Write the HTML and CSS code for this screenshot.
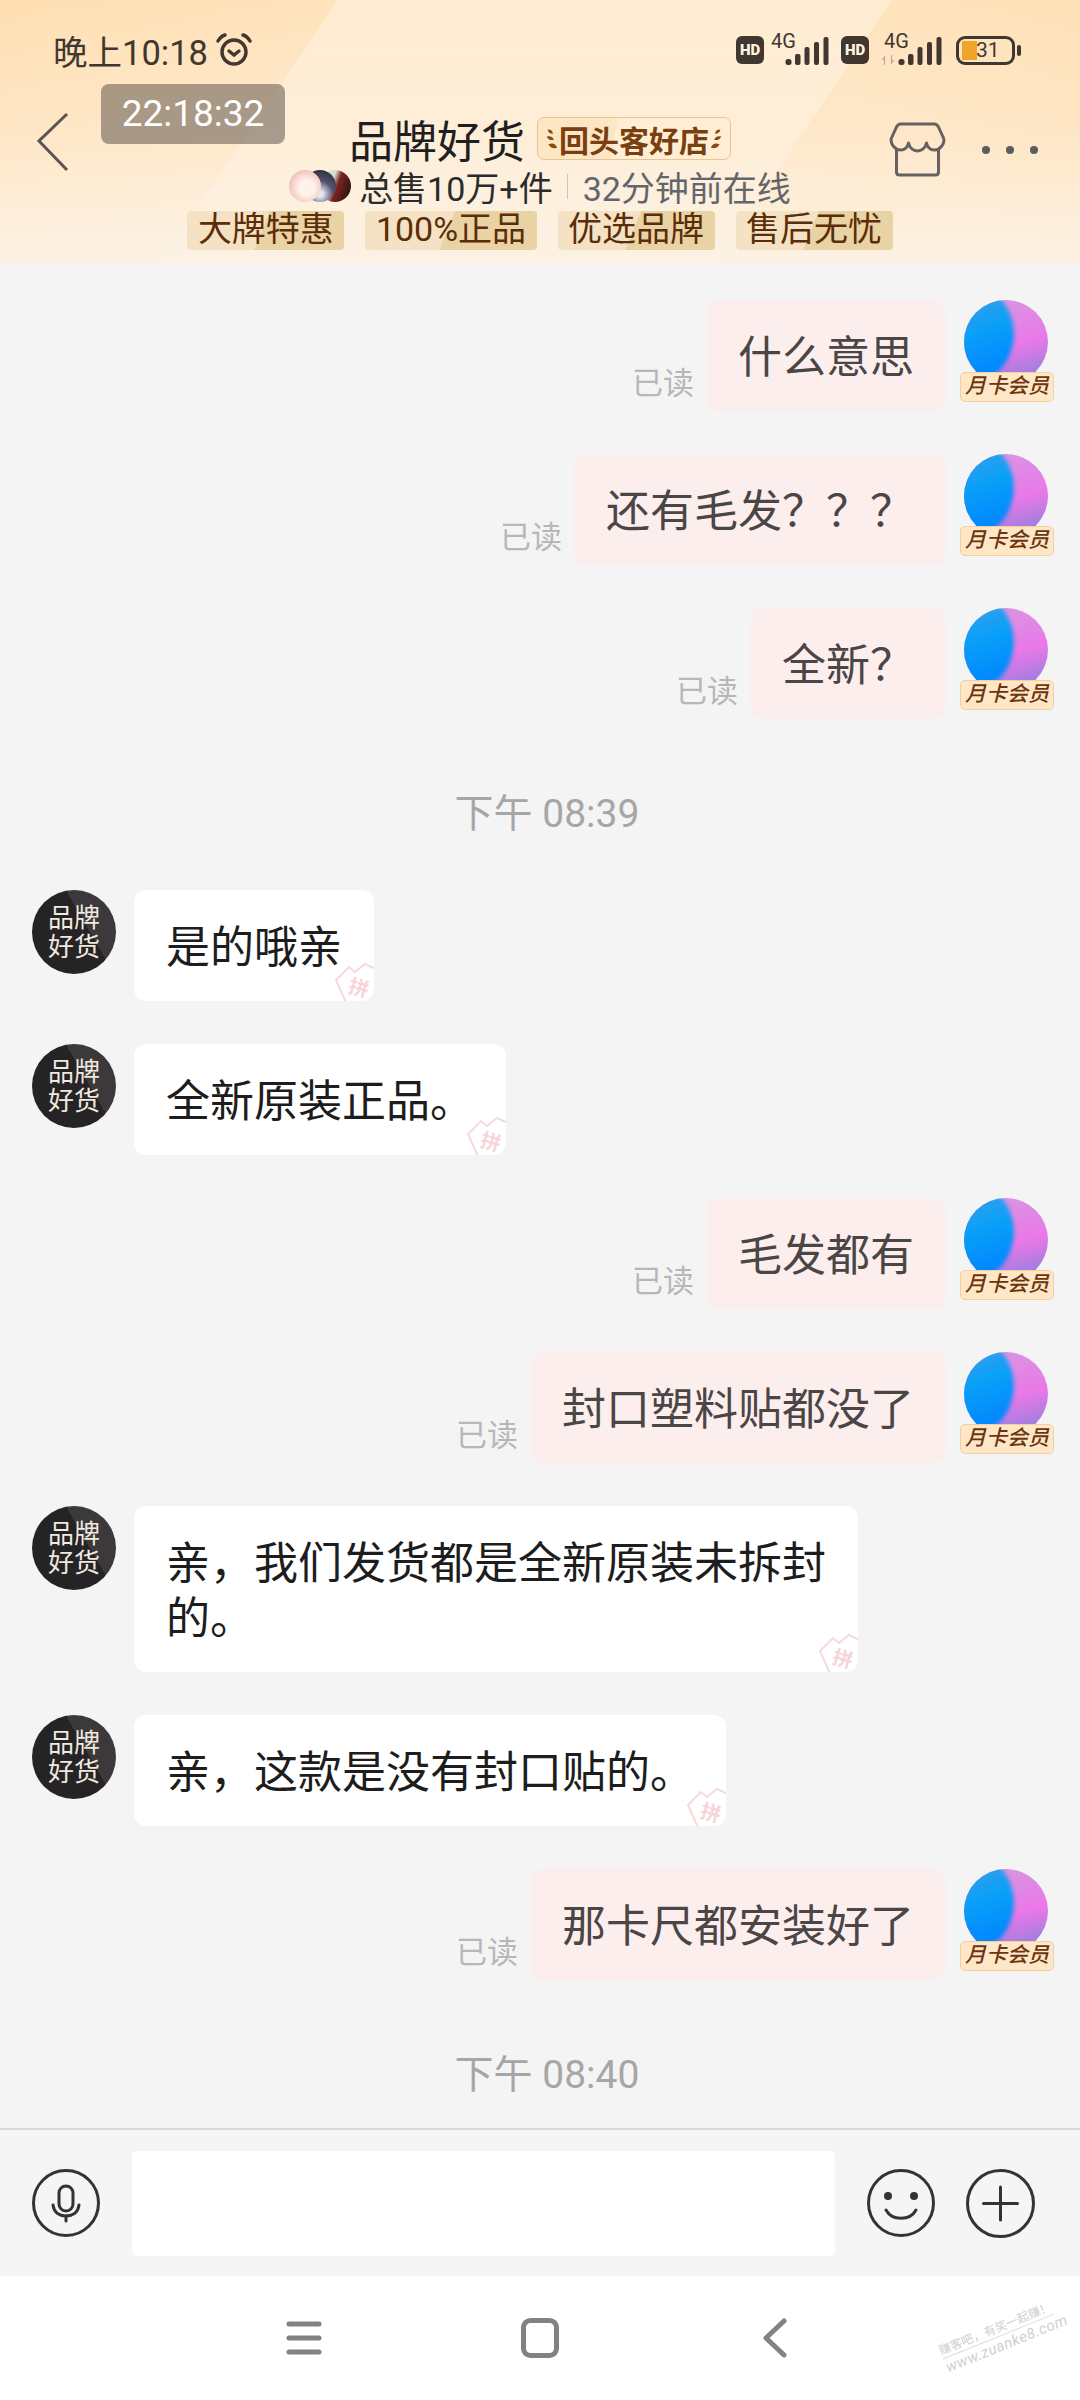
FILE: index.html
```html
<!DOCTYPE html>
<html>

<head>
    <title>品牌好货</title>
    <link rel="stylesheet" href="styles.css">
</head>

<body>
    <svg class="defs" width="0" height="0">
        <symbol id="signal" viewBox="0 0 43 30">
            <rect x="0" y="23" width="6" height="6" rx="2.5" />
            <rect x="9.5" y="18" width="5.5" height="11" rx="2" />
            <rect x="19" y="11" width="5" height="18" rx="2" />
            <rect x="28.500" y="6" width="5" height="23" rx="2" />
            <rect x="38" y="1" width="5" height="28" rx="2" />
        </symbol>
        <symbol id="stamp-shape" viewBox="0 0 40 38">
            <path d="M2 17 L15 4 L21 9 L31 1 L44 7 L44 46 L14 44 Z" fill="none" stroke="#f6d9dc" stroke-width="2" />
        </symbol>
    </svg>

    <header class="top">
        <div class="status">
            <div class="status-time">
                <span>晚上10:18</span>
                <svg width="36" height="34" viewBox="0 0 36 34" fill="none" stroke="#3f3730" stroke-width="3.4" stroke-linecap="round">
                    <circle cx="18" cy="19" r="12" />
                    <path d="M13 18 L18 22 L23 18" />
                    <path d="M2 8 Q5 3 9 2 M34 8 Q31 3 27 2" />
                </svg>
            </div>
            <div class="status-icons">
                <span class="hd">HD</span>
                <span class="net">
                    <span class="net-label">4G</span>
                    <svg class="net-bars" width="44" height="30"><use href="#signal" /></svg>
                </span>
                <span class="hd">HD</span>
                <span class="net net-second">
                    <span class="net-label">4G</span>
                    <svg class="net-arrows" width="14" height="12" viewBox="0 0 14 12" fill="#b9ab9a">
                        <path d="M1 6 L4 1 V11 H3 V6 Z M13 6 L10 11 V1 H11 V6 Z" />
                    </svg>
                    <svg class="net-bars" width="44" height="30"><use href="#signal" /></svg>
                </span>
                <span class="battery"><span class="battery-fill"></span><span class="battery-num">31</span></span>
                <span class="battery-nub"></span>
            </div>
        </div>

        <div class="timer">22:18:32</div>

        <div class="title-row">
            <div class="back">
                <svg width="32" height="60" viewBox="0 0 32 60" fill="none" stroke="#5a5550" stroke-width="3">
                    <path d="M30 2 L2 29 L30 58" />
                </svg>
            </div>
            <div class="title">
                <span class="shop-name">品牌好货</span>
                <span class="shop-badge">
                    <svg width="14" height="30" viewBox="0 0 16 30" fill="#8a4a12">
                        <path d="M3 4 Q9 4 9 9 Q4 9 3 4 Z M2 12 Q9 11 10 16 Q4 17 2 12 Z M4 21 Q11 18 14 25 Q7 27 4 21 Z" />
                    </svg>
                    <span>回头客好店</span>
                    <svg width="14" height="30" viewBox="0 0 16 30" fill="#8a4a12">
                        <path d="M13 4 Q7 4 7 9 Q12 9 13 4 Z M14 12 Q7 11 6 16 Q12 17 14 12 Z M12 21 Q5 18 2 25 Q9 27 12 21 Z" />
                    </svg>
                </span>
            </div>
            <div class="actions">
                <svg width="57" height="56" viewBox="0 0 56 56" fill="none" stroke="#656260" stroke-width="3" stroke-linejoin="round">
                    <path d="M11 2 H45 C47 2 48 3 49 5 L54 16 C56 22 50 28 45 28 C41 28 38 26 37 21 C36 26 32 29 28 29 C24 29 20 26 19 21 C18 26 15 28 11 28 C6 28 0 22 2 16 L7 5 C8 3 9 2 11 2 Z" />
                    <path d="M7 28 V50 Q7 53 10 53 H46 Q49 53 49 50 V28" />
                </svg>
                <div class="dots"><i></i><i></i><i></i></div>
            </div>
        </div>

        <div class="sub-row">
            <span class="faces">
                <i class="face face-a"></i>
                <i class="face face-b"></i>
                <i class="face face-c"></i>
            </span>
            <span class="sold">总售10万+件</span>
            <span class="sep"></span>
            <span class="online">32分钟前在线</span>
        </div>

        <div class="tags">
            <span class="tag">大牌特惠</span>
            <span class="tag">100%正品</span>
            <span class="tag">优选品牌</span>
            <span class="tag">售后无忧</span>
        </div>
    </header>

    <main class="chat">
        <div class="msg msg-me">
            <span class="read">已读</span>
            <div class="bubble">什么意思</div>
            <div class="me"><div class="me-ball"></div><span class="me-tag">月卡会员</span></div>
        </div>
        <div class="msg msg-me">
            <span class="read">已读</span>
            <div class="bubble">还有毛发？？？</div>
            <div class="me"><div class="me-ball"></div><span class="me-tag">月卡会员</span></div>
        </div>
        <div class="msg msg-me">
            <span class="read">已读</span>
            <div class="bubble">全新？</div>
            <div class="me"><div class="me-ball"></div><span class="me-tag">月卡会员</span></div>
        </div>

        <div class="time">下午 08:39</div>

        <div class="msg">
            <div class="shop-avatar">品牌<br>好货</div>
            <div class="bubble">是的哦亲<svg class="stamp" viewBox="0 0 40 38"><use href="#stamp-shape" width="40" height="38" /><text class="stamp-char" x="15" y="32" transform="rotate(15 25 24)">拼</text></svg></div>
        </div>
        <div class="msg">
            <div class="shop-avatar">品牌<br>好货</div>
            <div class="bubble">全新原装正品。<svg class="stamp" viewBox="0 0 40 38"><use href="#stamp-shape" width="40" height="38" /><text class="stamp-char" x="15" y="32" transform="rotate(15 25 24)">拼</text></svg></div>
        </div>

        <div class="msg msg-me">
            <span class="read">已读</span>
            <div class="bubble">毛发都有</div>
            <div class="me"><div class="me-ball"></div><span class="me-tag">月卡会员</span></div>
        </div>
        <div class="msg msg-me">
            <span class="read">已读</span>
            <div class="bubble">封口塑料贴都没了</div>
            <div class="me"><div class="me-ball"></div><span class="me-tag">月卡会员</span></div>
        </div>

        <div class="msg">
            <div class="shop-avatar">品牌<br>好货</div>
            <div class="bubble">亲，我们发货都是全新原装未拆封的。<svg class="stamp" viewBox="0 0 40 38"><use href="#stamp-shape" width="40" height="38" /><text class="stamp-char" x="15" y="32" transform="rotate(15 25 24)">拼</text></svg></div>
        </div>
        <div class="msg">
            <div class="shop-avatar">品牌<br>好货</div>
            <div class="bubble">亲，这款是没有封口贴的。<svg class="stamp" viewBox="0 0 40 38"><use href="#stamp-shape" width="40" height="38" /><text class="stamp-char" x="15" y="32" transform="rotate(15 25 24)">拼</text></svg></div>
        </div>

        <div class="msg msg-me">
            <span class="read">已读</span>
            <div class="bubble">那卡尺都安装好了</div>
            <div class="me"><div class="me-ball"></div><span class="me-tag">月卡会员</span></div>
        </div>

        <div class="time">下午 08:40</div>
    </main>

    <div class="input-bar">
        <svg width="68" height="68" viewBox="0 0 68 68" fill="none" stroke="#333" stroke-width="3" stroke-linecap="round">
            <circle cx="34" cy="34" r="32.500" />
            <rect x="27" y="17" width="14" height="25" rx="7" />
            <path d="M21 36 C22 44 28 47 34 47 C40 47 46 44 47 36" />
            <path d="M34 47 V52" />
        </svg>
        <div class="input-box"></div>
        <svg class="smile" width="68" height="68" viewBox="0 0 68 68" fill="none" stroke="#333" stroke-width="3" stroke-linecap="round">
            <circle cx="34" cy="34" r="32.500" />
            <circle cx="21" cy="27" r="4" fill="#333" stroke="none" />
            <circle cx="47" cy="27" r="4" fill="#333" stroke="none" />
            <path d="M19 41 C25 52 43 52 49 41" />
        </svg>
        <svg width="69" height="69" viewBox="0 0 69 69" fill="none" stroke="#333" stroke-width="3" stroke-linecap="round">
            <circle cx="34.500" cy="34.500" r="33" />
            <path d="M17.500 34.500 H51.500 M34.500 18 V51" />
        </svg>
    </div>

    <nav class="nav">
        <svg width="36" height="36" viewBox="0 0 36 36" stroke="#828282" stroke-width="5" stroke-linecap="round">
            <path d="M3 4 H33 M3 18 H33 M3 32 H33" />
        </svg>
        <svg width="38" height="40" viewBox="0 0 38 40" fill="none" stroke="#828282" stroke-width="5">
            <rect x="2.500" y="2.500" width="33" height="35" rx="7" />
        </svg>
        <svg class="nav-back" width="24" height="40" viewBox="0 0 24 40" fill="none" stroke="#828282" stroke-width="5" stroke-linecap="round" stroke-linejoin="round">
            <path d="M21 3 L3 20 L21 37" />
        </svg>
    </nav>

    <div class="watermark">
        <div class="watermark-top">赚客吧，有奖一起赚！</div>
        <div class="watermark-url">www.zuanke8.com</div>
    </div>
</body>

</html>
```

FILE: styles.css
```css
body {
    font-family: Roboto, "Noto Sans CJK SC", sans-serif;
    background-color: #f4f4f4;
    margin: 0;
    padding: 0;
    width: 1080px;
    height: 2400px;
    display: flex;
    flex-direction: column;
    position: relative;
    overflow: hidden;
}

.defs {
    position: absolute;
}

/* header */
.top {
    height: 265px;
    box-sizing: border-box;
    position: relative;
    display: flex;
    flex-direction: column;
    background:
        linear-gradient(to bottom, rgba(252, 242, 229, 0) 0%, rgba(252, 242, 229, 0.35) 50%, #fcf2e5 100%),
        linear-gradient(124deg, #ffdfb2 0, #ffe3bc 280px, transparent 280px),
        linear-gradient(304deg, #ffdfb2 0, #ffe3bc 304px, transparent 304px),
        #ffecd1;
}

.status {
    height: 40px;
    margin-top: 30px;
    padding: 0 59px 0 53px;
    display: flex;
    justify-content: space-between;
    align-items: center;
    color: #3f3730;
}

.status-time {
    display: flex;
    align-items: center;
    gap: 8px;
    font-size: 34.500px;
}

.status-icons {
    display: flex;
    align-items: center;
}

.hd {
    width: 28px;
    height: 28px;
    background-color: #3f3730;
    color: #fff3e0;
    border-radius: 6px;
    font-size: 15px;
    font-weight: 900;
    line-height: 28px;
    text-align: center;
}

.net {
    width: 58px;
    height: 32px;
    margin-left: 7px;
    margin-right: 12px;
    position: relative;
}

.net-second {
    width: 61px;
    margin-left: 12px;
    margin-right: 14px;
}

.net-label {
    position: absolute;
    left: 0;
    top: -1px;
    font-size: 20px;
    line-height: 16px;
}

.net-second .net-label {
    left: 3px;
}

.net-bars {
    position: absolute;
    right: 0;
    bottom: 0;
    fill: #3f3730;
}

.net-arrows {
    position: absolute;
    left: 0;
    bottom: 0;
}

.battery {
    width: 59px;
    height: 29px;
    box-sizing: border-box;
    border: 3px solid #3f3730;
    border-radius: 9px;
    display: flex;
    position: relative;
    overflow: hidden;
}

.battery-fill {
    width: 15px;
    margin: 2px 0 2px 3px;
    background-color: #f2a32c;
}

.battery-num {
    position: absolute;
    left: 17px;
    top: -2px;
    font-size: 21px;
    line-height: 27px;
}

.battery-nub {
    width: 4px;
    height: 11px;
    margin-left: 2px;
    background-color: #3f3730;
    border-radius: 2px;
}

.timer {
    position: absolute;
    left: 101px;
    top: 84px;
    width: 184px;
    height: 60px;
    background-color: rgba(110, 100, 90, 0.6);
    border-radius: 8px;
    color: #fff;
    font-size: 37px;
    line-height: 60px;
    text-align: center;
}

.title-row {
    height: 60px;
    margin-top: 29px;
    display: grid;
    grid-template-columns: 1fr auto 1fr;
    align-items: center;
}

.back {
    align-self: start;
    margin-top: 13px;
    padding-left: 37px;
    display: flex;
}

.title {
    display: flex;
    align-items: center;
    gap: 12px;
}

.shop-name {
    font-size: 44px;
    color: #1f1f1f;
}

.shop-badge {
    height: 43px;
    box-sizing: border-box;
    padding: 0 7px;
    display: flex;
    align-items: center;
    border: 1px solid #edc38f;
    border-radius: 7px;
    background: linear-gradient(100deg, #fde6c4 40%, #ffeed4 40%);
    color: #7a3f10;
    font-size: 30px;
    font-weight: 700;
}

.actions {
    align-self: start;
    margin-top: 23px;
    padding-right: 42px;
    display: flex;
    justify-content: flex-end;
    align-items: center;
    gap: 36px;
}

.dots {
    display: flex;
    gap: 16px;
}

.dots i {
    width: 8px;
    height: 8px;
    background-color: #5c5c5c;
    border-radius: 50%;
}

.sub-row {
    height: 40px;
    margin-top: 7px;
    display: flex;
    justify-content: center;
    align-items: center;
    font-size: 34px;
    color: #2b2b2b;
}

.faces {
    display: flex;
    margin-right: 8px;
}

.face {
    width: 32px;
    height: 32px;
    border-radius: 50%;
    margin-left: -17px;
}

.face:first-child {
    margin-left: 0;
}

.face-a {
    position: relative;
    z-index: 2;
    background: radial-gradient(circle at 55% 55%, #fff2ea 0 30%, #f6cfc9 60%, #cfa690 100%);
}

.face-b {
    position: relative;
    z-index: 1;
    background: radial-gradient(circle at 50% 75%, #e7e6ee 0 10%, #54546e 45%, #1f1f30 100%);
}

.face-c {
    background: linear-gradient(110deg, #cfe3cf 0 40%, #7c2420 55%, #18100e 100%);
}

.sep {
    width: 1px;
    height: 25px;
    margin: 0 15px 0 14px;
    background-color: #cbc4ba;
}

.online {
    color: #62666b;
}

.tags {
    margin-top: 5px;
    display: flex;
    justify-content: center;
    gap: 21px;
}

.tag {
    height: 39px;
    padding: 0 10.500px;
    background: linear-gradient(112deg, #f5e2c5 48%, #e9d2a4 48%);
    border-radius: 4px;
    color: #5b2d08;
    font-size: 34px;
    line-height: 36px;
}

/* messages */
.chat {
    flex: 1;
    min-height: 0;
    padding-top: 35px;
    display: flex;
    flex-direction: column;
    gap: 43px;
}

.msg {
    display: flex;
    align-items: flex-start;
    padding-left: 32px;
}

.msg-me {
    justify-content: flex-end;
    padding-left: 0;
    padding-right: 32px;
}

.bubble {
    max-width: 660px;
    padding: 31px 32px 25px;
    position: relative;
    overflow: hidden;
    background-color: #fff;
    border-radius: 12px;
    color: #1d1d1d;
    font-size: 44px;
    line-height: 55px;
}

.msg-me .bubble {
    background-color: #fdeeee;
    color: #4a4646;
}

.read {
    align-self: flex-end;
    margin-right: 12px;
    margin-bottom: 7px;
    color: #b7b7b7;
    font-size: 31px;
    line-height: 40px;
}

.stamp {
    position: absolute;
    right: 0;
    bottom: 0;
    width: 40px;
    height: 38px;
}

.stamp-char {
    font-family: "Noto Sans CJK SC", sans-serif;
    font-size: 20px;
    font-weight: 700;
    fill: #f8d4d8;
}

.me {
    width: 84px;
    height: 84px;
    margin-left: 18px;
    position: relative;
}

.me-ball {
    width: 84px;
    height: 84px;
    border-radius: 50%;
    position: relative;
    overflow: hidden;
    background: linear-gradient(165deg, #d59ce0 0%, #ea78e8 55%, #8a80dc 95%);
}

.me-ball::before {
    content: "";
    position: absolute;
    left: -34px;
    top: -14px;
    width: 84px;
    height: 96px;
    border-radius: 50%;
    filter: blur(2px);
    background: linear-gradient(160deg, #4a9ee6 10%, #08a0f8 50%, #0080ff 95%);
}

.me-tag {
    position: absolute;
    left: -4px;
    top: 72px;
    width: 94px;
    height: 30px;
    box-sizing: border-box;
    background-color: #fde7c6;
    border: 1px solid #f6cf9c;
    border-radius: 5px;
    color: #6d3410;
    font-size: 21px;
    font-weight: 500;
    line-height: 27px;
    text-align: center;
    font-style: italic;
}

.shop-avatar {
    width: 84px;
    height: 84px;
    flex-shrink: 0;
    margin-right: 18px;
    border-radius: 50%;
    box-sizing: border-box;
    padding-top: 14px;
    background:
        linear-gradient(60deg, transparent 62%, rgba(255, 255, 255, 0.1) 62%),
        #252326;
    color: #efe9de;
    font-size: 26px;
    line-height: 29px;
    text-align: center;
}

.time {
    padding-top: 19px;
    padding-left: 14px;
    color: #a6a6a6;
    font-size: 39px;
    line-height: 66px;
    text-align: center;
}

/* input bar */
.input-bar {
    height: 148px;
    box-sizing: border-box;
    padding-left: 32px;
    border-top: 2px solid #d8d8d8;
    background-color: #f5f5f5;
    display: flex;
    align-items: center;
}

.input-box {
    width: 703px;
    height: 105px;
    margin: 0 32px;
    background-color: #fff;
    border-radius: 5px;
}

.smile {
    margin-right: 31px;
}

.nav {
    height: 124px;
    padding-left: 286px;
    background-color: #fff;
    display: flex;
    align-items: center;
    gap: 199px;
}

.nav-back {
    margin-left: 5px;
}

.watermark {
    position: absolute;
    left: 939px;
    top: 2320px;
    width: 120px;
    transform: rotate(-22deg);
    color: #cfcfcf;
    text-align: center;
    white-space: nowrap;
}

.watermark-top {
    font-size: 12px;
    line-height: 16px;
    border-bottom: 1px solid #dcdcdc;
}

.watermark-url {
    font-size: 15px;
    line-height: 19px;
    font-style: italic;
    letter-spacing: 0.5px;
}
```
